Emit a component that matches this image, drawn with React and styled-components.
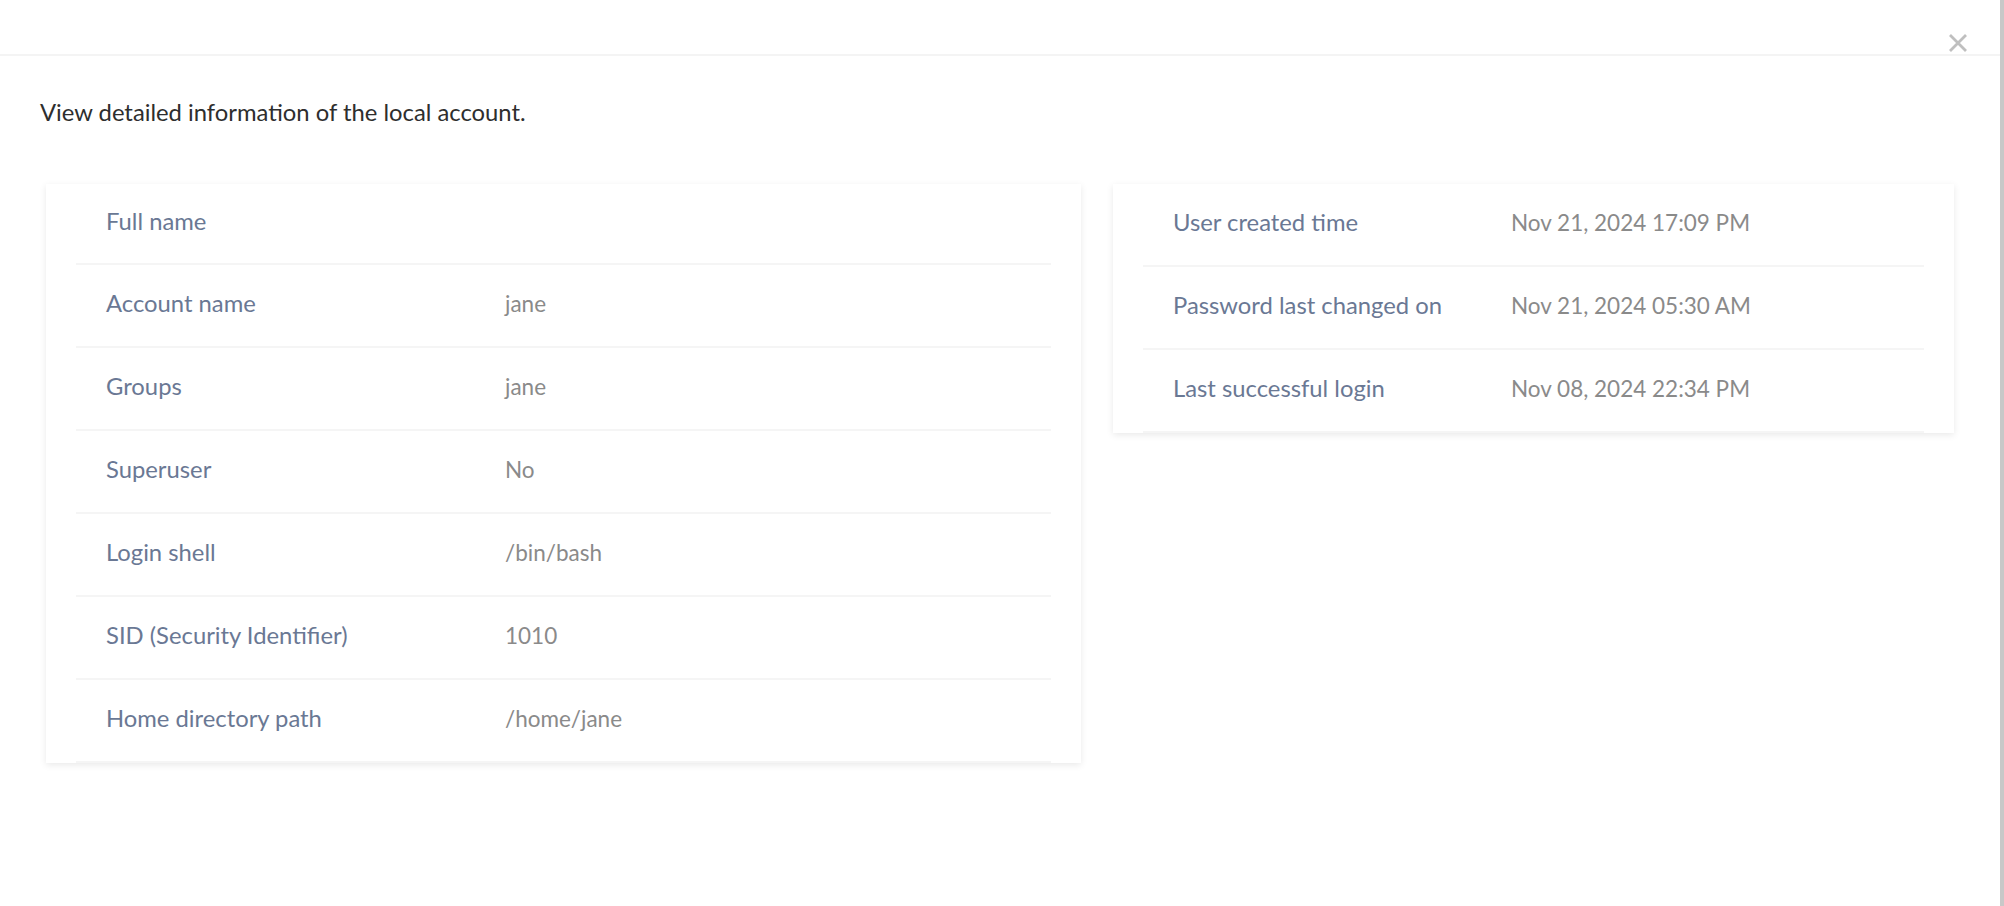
import React from 'react';
import styled, { createGlobalStyle } from 'styled-components';

const GlobalStyle = createGlobalStyle`
  body {
    margin: 0;
    background: #fff;
    font-family: Lato, 'Open Sans', sans-serif;
  }
`;

const Page = styled.div`
  display: flex;
  min-height: 100vh;
`;

const Modal = styled.div`
  flex: 1;
  position: relative;
  background: #fff;
`;

// the dimmed page behind the dialog peeking through on the right
const Backdrop = styled.div`
  width: 4px;
  background: #c8c8c8;
`;

const Header = styled.div`
  height: 54px;
  border-bottom: 2px solid #f4f4f4;
`;

const CloseButton = styled.button`
  position: absolute;
  top: 33px;
  right: 32px;
  width: 20px;
  height: 20px;
  padding: 0;
  border: 0;
  background: transparent;
  cursor: pointer;
  display: flex;
`;

const Body = styled.div`
  padding: 0 40px;
`;

const Description = styled.p`
  margin: 42px 0 57px;
  font-size: 23.8px;
  line-height: 1.2;
  color: #2e2e2e;
`;

const CardGrid = styled.div`
  display: grid;
  grid-template-columns: 1035fr 841fr;
  gap: 32px;
  align-items: start;
  padding: 0 6px;
`;

const Card = styled.div`
  background: #fff;
  padding: 0 30px;
  box-shadow: 0 2px 7px rgba(0, 0, 0, 0.09);
`;

const Row = styled.div`
  display: grid;
  grid-template-columns: ${props => props.labelWidth}px 1fr;
  align-items: center;
  padding: 23px 0 27px 30px;
  border-bottom: 2px solid #f5f5f5;
`;

const Label = styled.span`
  font-size: 23.8px;
  line-height: 29px;
  color: #6a7894;
`;

const Value = styled.span`
  font-size: 22.5px;
  line-height: 31px;
  color: #8a8a8a;
`;

const accountInfo = [
  ['Full name', ''],
  ['Account name', 'jane'],
  ['Groups', 'jane'],
  ['Superuser', 'No'],
  ['Login shell', '/bin/bash'],
  ['SID (Security Identifier)', '1010'],
  ['Home directory path', '/home/jane'],
];

const loginInfo = [
  ['User created time', 'Nov 21, 2024 17:09 PM'],
  ['Password last changed on', 'Nov 21, 2024 05:30 AM'],
  ['Last successful login', 'Nov 08, 2024 22:34 PM'],
];

const InfoCard = ({ rows, labelWidth }) => (
  <Card>
    {rows.map(([label, value]) => (
      <Row key={label} labelWidth={labelWidth}>
        <Label>{label}</Label>
        <Value>{value}</Value>
      </Row>
    ))}
  </Card>
);

export default function App() {
  return (
    <Page>
      <GlobalStyle />
      <Modal>
        <Header />
        <CloseButton aria-label="Close">
          <svg width="20" height="20" viewBox="0 0 20 20">
            <path d="M2 2L18 18M18 2L2 18" stroke="#bfbfbf" strokeWidth="2.8" />
          </svg>
        </CloseButton>
        <Body>
          <Description>View detailed information of the local account.</Description>
          <CardGrid>
            <InfoCard rows={accountInfo} labelWidth={399} />
            <InfoCard rows={loginInfo} labelWidth={338} />
          </CardGrid>
        </Body>
      </Modal>
      <Backdrop />
    </Page>
  );
}
